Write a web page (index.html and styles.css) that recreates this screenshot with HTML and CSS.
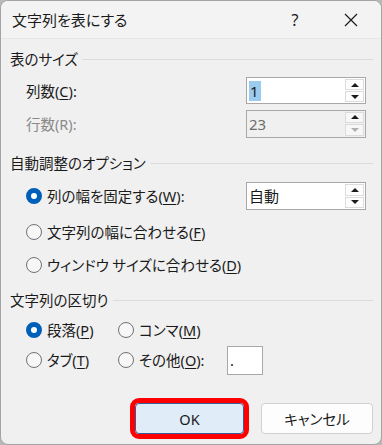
FILE: index.html
```html
<!DOCTYPE html>
<html lang="ja">
<head>
  <meta charset="UTF-8">
  <title>文字列を表にする</title>
  <link rel="stylesheet" href="styles.css">
</head>
<body>

<div class="window">
  <div class="titlebar">
    <span class="title">文字列を表にする</span>
    <span class="help">?</span>
    <span class="close">
      <svg width="14" height="14" viewBox="0 0 14 14"><path d="M1 1 L13 13 M13 1 L1 13" stroke="#1a1a1a" stroke-width="1.2" fill="none"/></svg>
    </span>
  </div>

  <div class="content">
    <div class="group-head"><span>表のサイズ</span><div class="rule"></div></div>

    <div class="row row-size">
      <span class="label">列数(<u>C</u>):</span>
      <div class="spin">
        <span class="value"><span class="sel">1</span></span>
        <div class="arrows">
          <div class="arrow"><span class="up"></span></div>
          <div class="arrow"><span class="down"></span></div>
        </div>
      </div>
    </div>

    <div class="row row-size">
      <span class="label disabled">行数(R):</span>
      <div class="spin spin-off">
        <span class="value">23</span>
        <div class="arrows">
          <div class="arrow"><span class="up"></span></div>
          <div class="arrow"><span class="down off"></span></div>
        </div>
      </div>
    </div>

    <div class="group-head head-2"><span>自動調整のオプション</span><div class="rule"></div></div>

    <div class="row opt-1">
      <span class="radio on"></span>
      <span class="label">列の幅を固定する(<u>W</u>):</span>
      <div class="spin spin-auto">
        <span class="value">自動</span>
        <div class="arrows">
          <div class="arrow"><span class="up"></span></div>
          <div class="arrow"><span class="down"></span></div>
        </div>
      </div>
    </div>
    <div class="row opt-2">
      <span class="radio"></span>
      <span class="label">文字列の幅に合わせる(<u>F</u>)</span>
    </div>
    <div class="row opt-3">
      <span class="radio"></span>
      <span class="label">ウィンドウ サイズに合わせる(<u>D</u>)</span>
    </div>

    <div class="group-head head-3"><span>文字列の区切り</span><div class="rule"></div></div>

    <div class="row sep-row">
      <div class="col-a"><span class="radio on"></span><span class="label">段落(<u>P</u>)</span></div>
      <div class="col-b"><span class="radio"></span><span class="label">コンマ(<u>M</u>)</span></div>
    </div>
    <div class="row sep-row">
      <div class="col-a"><span class="radio"></span><span class="label">タブ(<u>T</u>)</span></div>
      <div class="col-b"><span class="radio"></span><span class="label">その他(<u>O</u>):</span></div>
      <div class="other-box">.</div>
    </div>

    <div class="buttons">
      <button class="btn btn-ok">OK</button>
      <button class="btn">キャンセル</button>
    </div>
  </div>
</div>

</body>
</html>
```

FILE: styles.css
```css
body {
  margin: 0;
  background: #b9b9b9;
  font-family: "Noto Sans", "Noto Sans CJK JP", sans-serif;
  font-size: 14.5px;
  font-feature-settings: "palt";
  color: #1a1a1a;
}

.window {
  width: 380px;
  height: 443px;
  border: 1px solid #a3a3a3;
  border-radius: 8px;
  background: #f0f0f0;
  overflow: hidden;
}

.titlebar {
  height: 37px;
  display: flex;
  align-items: center;
  background: #f3f3f3;
  border-bottom: 1px solid #e6e6e6;
}

.title {
  padding-left: 11px;
  font-size: 15px;
  line-height: 20px;
}

.help {
  margin-left: auto;
  width: 46px;
  text-align: center;
  font-size: 16px;
  line-height: 20px;
}

.close {
  width: 46px;
  margin-right: 7px;
  margin-left: 10px;
  display: flex;
  justify-content: center;
}

.content {
  padding: 10px 8px 0 9px;
}

.group-head {
  height: 20px;
  display: flex;
  align-items: center;
  line-height: 20px;
}

.rule {
  flex: 1;
  margin-left: 4px;
  border-top: 1px solid #dcdcdc;
}

.head-2 {
  margin-top: 13px;
}

.head-3 {
  margin-top: 11px;
}

.row {
  display: flex;
  align-items: center;
  padding-left: 16px;
  line-height: 20px;
}

.row-size {
  height: 33px;
}

.group-head + .row-size {
  margin-top: 5px;
}

.label.disabled {
  color: #8a8a8a;
}

u {
  text-underline-offset: 2px;
}

.spin {
  margin-left: auto;
  margin-right: 7px;
  width: 118px;
  height: 25px;
  border: 1px solid #a8a8a8;
  background: #fff;
  display: flex;
  align-items: center;
  font-size: 15px;
}

.spin-off {
  background: #f0f0f0;
  color: #6d6d6d;
  height: 26px;
}

.spin-auto {
  height: 26px;
}

.value {
  flex: 1;
  padding-left: 2px;
}

.sel {
  background: #9ccbf0;
  padding: 0 2px 0 1px;
}

.arrows {
  width: 20px;
  height: 100%;
  display: flex;
  flex-direction: column;
  padding: 1px 1px 1px 0;
  box-sizing: border-box;
  gap: 1px;
}

.arrow {
  flex: 1;
  background: #fdfdfd;
  border: 1px solid #dcdcdc;
  display: flex;
  align-items: center;
  justify-content: center;
}

.spin-off .arrow {
  background: #f7f7f7;
}

.up, .down {
  width: 0;
  height: 0;
  border-left: 4px solid transparent;
  border-right: 4px solid transparent;
}

.up {
  border-bottom: 4px solid #1a1a1a;
}

.down {
  border-top: 4px solid #1a1a1a;
}

.down.off {
  border-top-color: #b0b0b0;
}

.radio {
  width: 14px;
  height: 14px;
  border: 1px solid #707070;
  border-radius: 50%;
  background: #f7f7f7;
  margin-right: 5px;
  flex-shrink: 0;
  box-sizing: content-box;
}

.radio.on {
  width: 6px;
  height: 6px;
  border: 5px solid #005fb8;
  background: #fff;
}

.opt-1 {
  height: 34px;
  margin-top: 6px;
}

.opt-2 {
  height: 37px;
}

.opt-3 {
  height: 29px;
}

.sep-row {
  height: 30px;
}

.head-3 + .sep-row {
  margin-top: 5px;
}

.col-a {
  width: 92px;
  display: flex;
  align-items: center;
}

.col-b {
  width: 109px;
  display: flex;
  align-items: center;
}

.other-box {
  width: 36px;
  height: 29px;
  border: 1px solid #a8a8a8;
  background: #fff;
  line-height: 27px;
  padding-left: 2px;
  box-sizing: border-box;
}

.buttons {
  display: flex;
  justify-content: flex-end;
  gap: 17px;
  margin-top: 28px;
}

.btn {
  width: 112px;
  height: 31px;
  border: 1px solid #d0d0d0;
  border-radius: 4px;
  background: #fdfdfd;
  font-family: inherit;
  font-size: 14.5px;
  font-feature-settings: "palt";
  color: #1a1a1a;
}

.btn-ok {
  width: 109px;
  background: #e0edf9;
  border-color: #3b5a9a;
  outline: 5px solid #ff0000;
  outline-offset: 0;
}
```
